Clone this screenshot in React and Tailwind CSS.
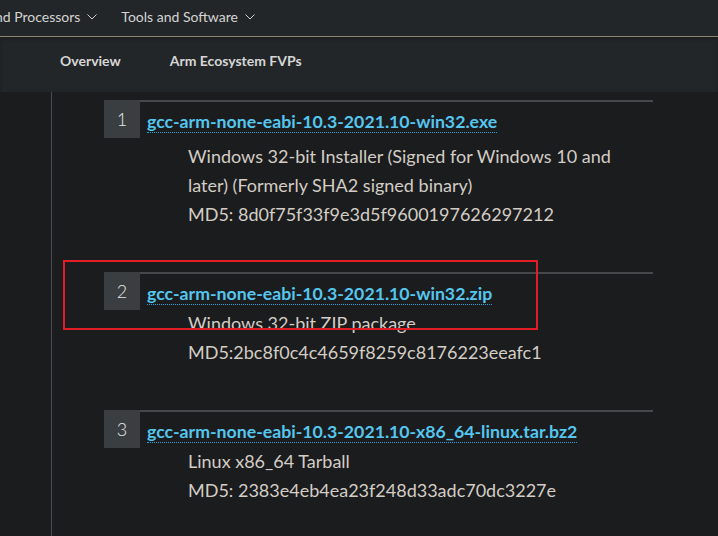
import React from "react";

const files = [
  {
    n: 1,
    name: "gcc-arm-none-eabi-10.3-2021.10-win32.exe",
    lines: [
      "Windows 32-bit Installer (Signed for Windows 10 and",
      "later) (Formerly SHA2 signed binary)",
      "MD5: 8d0f75f33f9e3d5f9600197626297212",
    ],
    gap: "mt-[6px]",
  },
  {
    n: 2,
    name: "gcc-arm-none-eabi-10.3-2021.10-win32.zip",
    lines: ["Windows 32-bit ZIP package", "MD5:2bc8f0c4c4659f8259c8176223eeafc1"],
    gap: "mt-[1px]",
  },
  {
    n: 3,
    name: "gcc-arm-none-eabi-10.3-2021.10-x86_64-linux.tar.bz2",
    lines: ["Linux x86_64 Tarball", "MD5: 2383e4eb4ea23f248d33adc70dc3227e"],
    gap: "mt-[1px]",
  },
];

function Chevron() {
  return (
    <svg width="10" height="6" viewBox="0 0 10 6" className="ml-[7px] mt-[1px]">
      <path d="M0.5 0.5 L5 5 L9.5 0.5" fill="none" stroke="#cfcfcf" strokeWidth="1" />
    </svg>
  );
}

export default function App() {
  return (
    <div
      className="w-[718px] h-[536px] overflow-hidden bg-[#1b1c1e] relative"
      style={{ fontFamily: "Lato, 'Open Sans', sans-serif" }}
    >
      {/* Top nav */}
      <div className="h-[36px] pb-[3px] bg-[#232628] flex items-center text-[14px] text-[#d4d4d4] whitespace-nowrap">
        <div className="flex items-center -ml-[12px]">
          <span>and Processors</span>
          <Chevron />
        </div>
        <div className="flex items-center ml-[24px]">
          <span>Tools and Software</span>
          <Chevron />
        </div>
      </div>
      <div className="h-px bg-[#8d8471]" />

      {/* Sub nav */}
      <div className="h-[55px] bg-[#232628] flex items-center pb-[9px] text-[14px] font-bold text-[#d6d6d6] shadow-[inset_0_2px_3px_rgba(0,0,0,0.25)]">
        <span className="ml-[60px]">Overview</span>
        <span className="ml-[49px]">Arm Ecosystem FVPs</span>
      </div>

      {/* Main */}
      <div className="flex">
        <div className="w-[52px] shrink-0 border-r border-[#4a4c4f] h-[444px]" />
        <div className="pt-[8px] pl-[52px]">
          {files.map((f) => (
            <div key={f.n} className="flex">
              <div className="w-[36px] h-[38px] shrink-0 bg-[#3a3e41] flex items-center justify-center text-[18px] font-light text-[#e6e6e6]">
                {f.n}
              </div>
              <div className="w-[513px] border-t-2 border-[#44484a] pb-[43px]">
                <div className="pt-[6px] pl-[7px] leading-[28px]">
                  <a className="text-[17.7px] font-bold text-[#55c6ee] border-b border-dotted border-[#1e9fd6] whitespace-nowrap">
                    {f.name}
                  </a>
                </div>
                <div className={`${f.gap} pl-[48px] text-[18px] leading-[29px] text-[#d3cdc5] whitespace-nowrap`}>
                  {f.lines.map((l) => (
                    <div key={l}>{l}</div>
                  ))}
                </div>
              </div>
            </div>
          ))}
        </div>
      </div>

      {/* annotation box */}
      <div className="absolute left-[63px] top-[260px] w-[475px] h-[70px] border-2 border-[#e31d26]" />
    </div>
  );
}
